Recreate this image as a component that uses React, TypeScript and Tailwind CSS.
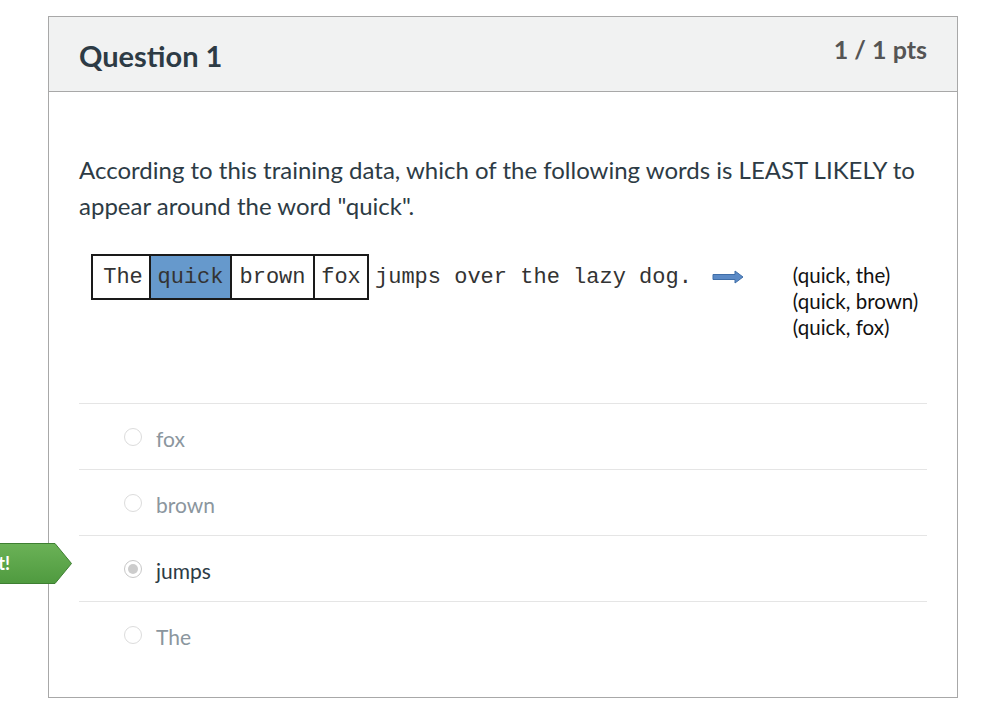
import { useState } from 'react';

const answers = [
  { id: 'fox', label: 'fox' },
  { id: 'brown', label: 'brown' },
  { id: 'jumps', label: 'jumps' },
  { id: 'the', label: 'The' },
];

function TrainingImage() {
  return (
    <div className="flex items-start mt-[30px] ml-[12px]">
      <div className="flex items-center h-[46px]">
        <div className="flex h-[46px] border-2 border-[#1a1a1a] font-['Liberation_Mono',monospace] text-[22px] text-[#333]">
          <span className="flex items-center justify-center w-[56px] pl-[4px] bg-white">The</span>
          <span className="flex items-center justify-center w-[83px] bg-[#6699cc] border-x-2 border-[#1a1a1a]">quick</span>
          <span className="flex items-center justify-center w-[83px] bg-white border-r-2 border-[#1a1a1a]">brown</span>
          <span className="flex items-center justify-center w-[52px] bg-white">fox</span>
        </div>
        <span className="ml-[6px] font-['Liberation_Mono',monospace] text-[22px] text-[#333] whitespace-pre">
          jumps over the lazy dog.
        </span>
        <svg width="32" height="14" viewBox="0 0 32 14" className="ml-[20px]">
          <path d="M1 4.5 H23 V1 L31 7 L23 13 V9.5 H1 Z" fill="#5b8ac6" stroke="#3f6ea8" strokeWidth="1" />
        </svg>
      </div>
      <div className="ml-[49px] mt-[8px] font-['Lato',sans-serif] text-[20.5px] leading-[26px] text-[#111]">
        <div>(quick, the)</div>
        <div>(quick, brown)</div>
        <div>(quick, fox)</div>
      </div>
    </div>
  );
}

function Radio({ checked }: { checked: boolean }) {
  return (
    <span
      className={
        checked
          ? 'flex items-center justify-center w-[18px] h-[18px] rounded-full border border-[#c8c8c8] bg-white'
          : 'block w-[18px] h-[18px] rounded-full border border-[#dcdcdc] bg-white'
      }
    >
      {checked && <span className="block w-[10px] h-[10px] rounded-full bg-[#cccccc]" />}
    </span>
  );
}

export default function App() {
  const [selected] = useState('jumps');

  return (
    <div className="relative w-[984px] h-[706px] bg-white font-['Lato',sans-serif] overflow-hidden">
      {/* correct flag */}
      <div className="absolute left-0 top-[543px] z-10">
        <svg width="73" height="41" viewBox="0 0 73 41">
          <defs>
            <linearGradient id="flag" x1="0" y1="0" x2="0" y2="1">
              <stop offset="0" stopColor="#6bb257" />
              <stop offset="1" stopColor="#4f9a3f" />
            </linearGradient>
          </defs>
          <path d="M-2 0.5 H55 L71.5 20.5 L55 40.5 H-2 Z" fill="url(#flag)" stroke="#3e7f32" strokeWidth="1" />
        </svg>
        <span className="absolute right-[63px] top-[9px] text-white font-bold text-[18px] leading-[22px] whitespace-nowrap">
          Correct!
        </span>
      </div>

      <div className="ml-[48px] pt-[16px]">
        <div className="w-[910px] h-[682px] border border-[#a8a8a8] flex flex-col">
          {/* header */}
          <div className="h-[75px] bg-[#f1f2f2] border-b border-[#a8a8a8] flex justify-between px-[30px]">
            <h2 className="mt-[21px] text-[29px] font-bold text-[#2d3b45] leading-[36px]">Question 1</h2>
            <div className="mt-[16px] text-[25px] font-bold text-[#555] leading-[32px]">1 / 1 pts</div>
          </div>

          {/* body */}
          <div className="px-[30px] pt-[60px]">
            <p className="text-[24px] leading-[36px] text-[#2d3b45]">
              According to this training data, which of the following words is LEAST LIKELY to appear around the word "quick".
            </p>
            <TrainingImage />

            <div className="mt-[63px]">
              {answers.map((a) => {
                const isSel = a.id === selected;
                return (
                  <div key={a.id} className="h-[66px] border-t border-[#e5e5e5] flex items-center pl-[45px]">
                    <Radio checked={isSel} />
                    <span
                      className={
                        isSel
                          ? 'ml-[14px] text-[21px] text-[#2d3b45] mt-[4px]'
                          : 'ml-[14px] text-[21px] text-[#8b969e] mt-[4px]'
                      }
                    >
                      {a.label}
                    </span>
                  </div>
                );
              })}
            </div>
          </div>
        </div>
      </div>
    </div>
  );
}
